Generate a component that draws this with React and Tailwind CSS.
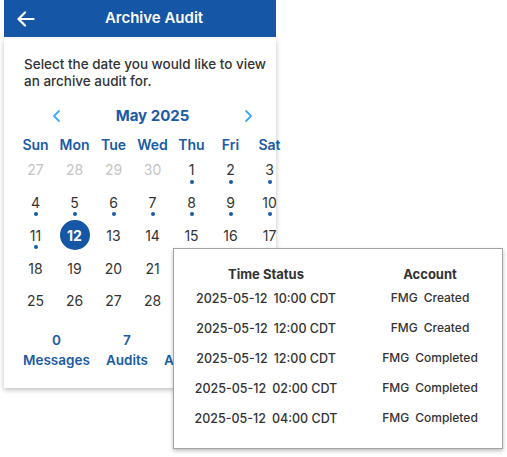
import React from "react";

const BLUE = "text-[#1a5aa6]";

function Day({ n, muted, dot, selected }) {
  return (
    <div className="relative flex h-[32.75px] items-center justify-center">
      {selected ? (
        <div className="flex h-[30px] w-[30px] items-center justify-center rounded-full bg-[#1556a6] text-[14px] font-bold text-white">
          {n}
        </div>
      ) : (
        <span className={`text-[14px] ${muted ? "text-[#c4c4c4]" : "text-[#333333]"}`}>{n}</span>
      )}
      {dot && (
        <span className="absolute left-1/2 top-[26px] h-[4px] w-[4px] -translate-x-1/2 rounded-full bg-[#1a5aa6]" />
      )}
    </div>
  );
}

const weeks = [
  [
    { n: 27, muted: true },
    { n: 28, muted: true },
    { n: 29, muted: true },
    { n: 30, muted: true },
    { n: 1, dot: true },
    { n: 2, dot: true },
    { n: 3, dot: true },
  ],
  [4, 5, 6, 7, 8, 9, 10].map((n) => ({ n, dot: true })),
  [
    { n: 11, dot: true },
    { n: 12, selected: true, dot: true },
    { n: 13 },
    { n: 14 },
    { n: 15 },
    { n: 16 },
    { n: 17 },
  ],
  [18, 19, 20, 21, 22, 23, 24].map((n) => ({ n })),
  [25, 26, 27, 28, 29, 30, 31].map((n) => ({ n })),
];

const rows = [
  ["10:00", "Created"],
  ["12:00", "Created"],
  ["12:00", "Completed"],
  ["02:00", "Completed"],
  ["04:00", "Completed"],
];

export default function App() {
  return (
    <div className="relative h-[457px] w-[507px] overflow-hidden bg-white font-['Inter','Noto_Sans',sans-serif]">
      <div className="ml-[4px] w-[272px]">
        <div className="flex h-[37px] items-center bg-[#1556a6] px-[13px]">
          <svg width="18" height="16" viewBox="0 0 18 16" fill="none" stroke="white" strokeWidth="2.2" strokeLinecap="round" strokeLinejoin="round">
            <path d="M16.5 8H2" />
            <path d="M8 1.5L1.5 8L8 14.5" />
          </svg>
          <div className="flex-1 pl-[10px] text-center text-[15px] font-semibold text-white">Archive Audit</div>
        </div>
        <div className="mt-[2px] h-[349px] bg-white shadow-[0_2px_5px_rgba(0,0,0,0.25)]">
          <p className="pl-[20px] pr-[1px] pt-[17px] text-[13.5px] font-medium leading-[17px] text-[#333333]">
            Select the date you would like to view an archive audit for.
          </p>
          <div className="mt-[15px] flex items-center justify-between pl-[47px] pr-[22px]">
            <svg width="10" height="14" viewBox="0 0 10 14" fill="none" stroke="#3fa9f5" strokeWidth="1.8" strokeLinecap="round" strokeLinejoin="round">
              <path d="M8 2L3 7L8 12" />
            </svg>
            <span className={`text-[15px] font-bold ${BLUE}`}>May 2025</span>
            <svg width="10" height="14" viewBox="0 0 10 14" fill="none" stroke="#3fa9f5" strokeWidth="1.8" strokeLinecap="round" strokeLinejoin="round">
              <path d="M2 2L7 7L2 12" />
            </svg>
          </div>
          <div className="ml-[12px] mt-[6px] w-[273px]">
            <div className="grid h-[20px] grid-cols-7 items-center">
              {["Sun", "Mon", "Tue", "Wed", "Thu", "Fri", "Sat"].map((d) => (
                <div key={d} className={`text-center text-[14px] font-semibold ${BLUE}`}>{d}</div>
              ))}
            </div>
            <div className="grid grid-cols-7">
              {weeks.flat().map((d, i) => (
                <Day key={i} {...d} />
              ))}
            </div>
          </div>
          <div className="mt-[13px] flex gap-[16px] pl-[19px] text-[13.5px] font-semibold">
            <div className={`flex flex-col items-center leading-[20px] ${BLUE}`}>
              <span>0</span>
              <span>Messages</span>
            </div>
            <div className={`flex flex-col items-center leading-[20px] ${BLUE}`}>
              <span>7</span>
              <span>Audits</span>
            </div>
            <div className={`flex flex-col items-center leading-[20px] ${BLUE}`}>
              <span>1</span>
              <span>Accounts</span>
            </div>
          </div>
        </div>
      </div>

      <div className="absolute left-[173px] top-[248px] h-[201px] w-[330px] border border-[#a3a3a3] bg-white shadow-[0_2px_4px_rgba(0,0,0,0.25)]">
        <div className="grid grid-cols-[184px_1fr] pt-[16px] text-[#333333]">
          <div className="text-center text-[13px] font-bold leading-[18px]">Time Status</div>
          <div className="text-center text-[13px] font-bold leading-[18px]">Account</div>
          {rows.map(([t, s], i) => (
            <React.Fragment key={i}>
              <div className="flex h-[30px] items-center justify-center pt-[2px] text-[12.5px] font-medium">
                <span>2025-05-12</span>
                <span className="ml-[6px]">{t} CDT</span>
              </div>
              <div className="flex h-[30px] items-center justify-center pb-[1px] text-[12px] font-medium">
                <span>FMG</span>
                <span className="ml-[6px]">{s}</span>
              </div>
            </React.Fragment>
          ))}
        </div>
      </div>
    </div>
  );
}
